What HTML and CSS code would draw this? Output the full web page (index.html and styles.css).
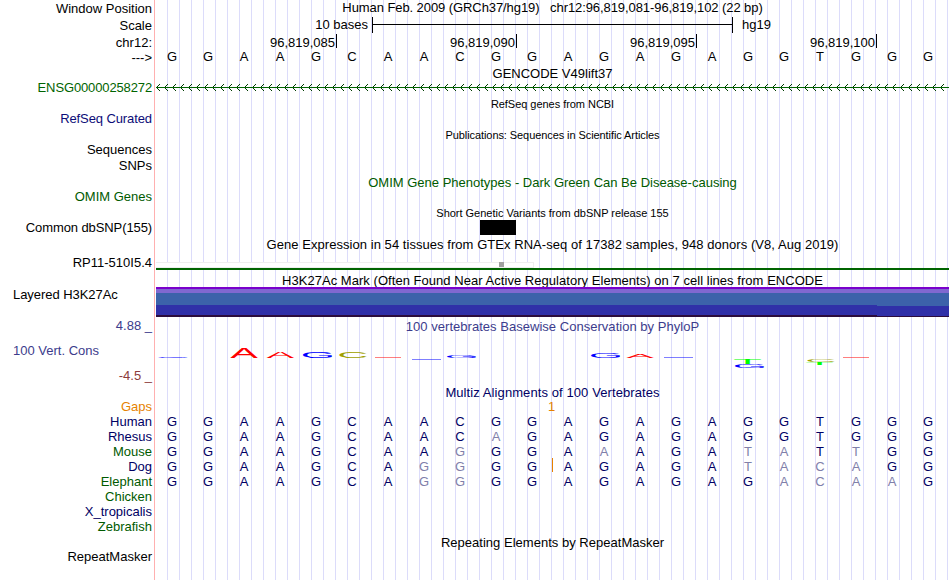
FILE: index.html
```html
<!doctype html>
<html lang="en">
    <head>
        <meta charset="UTF-8" />
        <meta name="viewport" content="width=device-width, initial-scale=1.0" />
        <title>Human chr12:96,819,081-96,819,102</title>
        <link rel="stylesheet" href="styles.css">
    </head>
    <body>
        <div class="browser">
            <div class="labels">
                <div class="group ruler-labels">
                    <div>Window Position</div>
                    <div>Scale</div>
                    <div>chr12:</div>
                </div>
                <div class="group">---&gt;</div>
                <div class="group gencode-label green">ENSG00000258272</div>
                <div class="group track-label refseq-label navy">RefSeq Curated</div>
                <div class="group track-label">Sequences</div>
                <div class="group snps-label">SNPs</div>
                <div class="group track-label dark-green">OMIM Genes</div>
                <div class="group track-label dbsnp-label">Common dbSNP(155)</div>
                <div class="group gtex-label">RP11-510I5.4</div>
                <div class="group h3k-label">Layered H3K27Ac</div>
                <div class="group cons-labels">
                    <div>4.88 _</div>
                    <div class="cons-name">100 Vert. Cons</div>
                    <div class="cons-min">-4.5 _</div>
                </div>
                <div class="group species-labels">
                    <div class="orange">Gaps</div>
                    <div class="blue">Human</div>
                    <div class="blue">Rhesus</div>
                    <div class="dark-green">Mouse</div>
                    <div class="blue">Dog</div>
                    <div class="dark-green">Elephant</div>
                    <div class="dark-green">Chicken</div>
                    <div class="blue">X_tropicalis</div>
                    <div class="dark-green">Zebrafish</div>
                </div>
                <div class="group repeat-label">RepeatMasker</div>
            </div>

            <div class="tracks">
                <div class="title position">Human Feb. 2009 (GRCh37/hg19)   chr12:96,819,081-96,819,102 (22 bp)</div>
                <div class="scale">
                    <span class="scale-size">10 bases</span>
                    <span class="scale-bar"></span>
                    <span>hg19</span>
                </div>
                <div class="ticks">
                    <span>96,819,085</span>
                    <span>96,819,090</span>
                    <span>96,819,095</span>
                    <span>96,819,100</span>
                </div>
                <div class="bases" data-seq="GGAAGCAACGGAGAGAGGTGGG"></div>

                <div class="title gencode">GENCODE V49lift37</div>
                <svg class="intron" width="793" height="7" shape-rendering="crispEdges">
                    <defs>
                        <pattern id="arrows" width="8" height="7" patternUnits="userSpaceOnUse">
                            <path d="M1 2h1v1h-1zM2 1h1v1h-1zM3 0h1v1h-1zM1 4h1v1h-1zM2 5h1v1h-1zM3 6h1v1h-1z" />
                        </pattern>
                    </defs>
                    <rect class="intron-line" y="3" width="793" height="1" />
                    <rect width="793" height="7" fill="url(#arrows)" />
                </svg>

                <div class="title small refseq">RefSeq genes from NCBI</div>
                <div class="title small pubs">Publications: Sequences in Scientific Articles</div>
                <div class="title omim dark-green">OMIM Gene Phenotypes - Dark Green Can Be Disease-causing</div>

                <div class="title small dbsnp">Short Genetic Variants from dbSNP release 155</div>
                <div class="snp"></div>

                <div class="title gtex">Gene Expression in 54 tissues from GTEx RNA-seq of 17382 samples, 948 donors (V8, Aug 2019)</div>
                <div class="gtex-graph"><span></span></div>
                <div class="gtex-gene"></div>

                <div class="title h3k">H3K27Ac Mark (Often Found Near Active Regulatory Elements) on 7 cell lines from ENCODE</div>
                <svg class="h3k-graph" width="793" height="30" shape-rendering="crispEdges">
                    <rect width="793" height="30" fill="#7a00cc" />
                    <rect y="2" width="793" height="4" fill="#8068d0" />
                    <rect y="6" width="793" height="13" fill="#3c62aa" />
                    <rect y="18" width="721" height="12" fill="#3030a8" />
                    <rect x="721" y="19" width="72" height="11" fill="#3030a8" />
                    <rect y="28" width="721" height="2" fill="#2c0c3c" />
                    <rect x="721" y="29" width="72" height="1" fill="#2c0c3c" />
                </svg>

                <div class="title cons">100 vertebrates Basewise Conservation by PhyloP</div>
                <!-- logo letters are stretched to the score of each base -->
                <svg class="logo" width="793" height="51">
                    <g class="c-g">
                        <text transform="translate(0.2 24) scale(.44 .02)">G</text>
                        <text transform="translate(144.7 24) scale(.44 .082)">G</text>
                        <text transform="translate(288.8 24) scale(.44 .04)">G</text>
                        <text transform="translate(432.8 24) scale(.44 .07)">G</text>
                        <text transform="translate(576.8 34) scale(.44 .045)">G</text>
                    </g>
                    <g class="c-a">
                        <text transform="translate(74.3 24) scale(.415 .145)">A</text>
                        <text transform="translate(110.5 24) scale(.415 .085)">A</text>
                        <text transform="translate(470.3 24) scale(.415 .058)">A</text>
                    </g>
                    <g class="c-c">
                        <text transform="translate(181.3 24) scale(.43 .093)">C</text>
                        <text transform="translate(649.3 28) scale(.43 .036)">C</text>
                    </g>
                    <g class="c-t">
                        <text transform="translate(577.3 30) scale(.47 .073)">T</text>
                        <text transform="translate(649.3 31) scale(.47 .044)">T</text>
                    </g>
                    <g shape-rendering="crispEdges">
                        <rect class="c-a thin" x="219" y="23" width="26" height="1" />
                        <rect class="c-g thin" x="256" y="25" width="29" height="1" />
                        <rect class="c-g thin" x="508" y="23" width="29" height="1" />
                        <rect class="c-a thin" x="687" y="23" width="26" height="1" />
                    </g>
                </svg>

                <div class="title multiz blue">Multiz Alignments of 100 Vertebrates</div>
                <div class="gaps orange">1</div>
                <div class="bases align" data-seq="GGAAGCAACGGAGAGAGGTGGG"></div>
                <div class="bases align" data-seq="GGAAGCAACAGAGAGAGGTGGG"></div>
                <div class="bases align" data-seq="GGAAGCAAGGGAAAGATATTGG"></div>
                <div class="bases align" data-seq="GGAAGCAGGGGAGAGATACAGG" data-insert="11"></div>
                <div class="bases align" data-seq="GGAAGCAGGGGAGAGAGACAAG"></div>

                <div class="title repeats">Repeating Elements by RepeatMasker</div>
            </div>
        </div>
        <script src="bases.js"></script>
    </body>
</html>
```
FILE: styles.css
```css
body {
    margin: 0;
    background: #fff;
    color: #000;
    font: 13px/15px "Liberation Sans", Arial, sans-serif;
}

.browser {
    display: flex;
    width: 949px;
    height: 580px;
    overflow: hidden;
}

/* left column */

.labels {
    box-sizing: border-box;
    width: 155px;
    flex: none;
    padding: 1px 2px 0 0;
    border-right: 1px solid #ffb0b0;
    text-align: right;
    white-space: nowrap;
}

.ruler-labels {
    display: flex;
    flex-direction: column;
    gap: 2px;
}

.gencode-label {
    margin-top: 15px;
    letter-spacing: -0.13px;
}

.track-label {
    margin-top: 16px;
}

.refseq-label,
.dbsnp-label {
    letter-spacing: -0.1px;
}

.snps-label {
    margin-top: 1px;
}

.gtex-label {
    margin-top: 20px;
}

.h3k-label {
    margin-top: 17px;
    padding-left: 13px;
    letter-spacing: -0.05px;
    text-align: left;
}

.cons-labels {
    margin-top: 16px;
    color: #3c3c8c;
}

.cons-name {
    margin-top: 10px;
    padding-left: 13px;
    text-align: left;
}

.cons-min {
    margin-top: 10px;
    color: #8c3c3c;
}

.species-labels {
    margin-top: 16px;
}

.repeat-label {
    margin-top: 15px;
}

.green {
    color: #006400;
}

.dark-green {
    color: #005a00;
}

.navy {
    color: #0c0c78;
}

.blue {
    color: #000064;
}

.orange {
    color: #e68200;
}

/* right column, guide lines every 12px */

.tracks {
    width: 793px;
    padding-left: 1px;
    background: repeating-linear-gradient(to right, #dcdcfa 0 1px, transparent 1px 12px) 12px 0 no-repeat;
}

.tracks svg {
    display: block;
}

.title {
    text-align: center;
    white-space: pre;
}

.small {
    font-size: 11px;
    line-height: 13px;
}

.position {
    letter-spacing: -0.08px;
}

.scale {
    display: flex;
    height: 16px;
    margin-top: 2px;
}

.scale-size {
    width: 212px;
    margin-right: 4px;
    text-align: right;
}

.scale-bar {
    box-sizing: border-box;
    width: 361px;
    margin-right: 9px;
    border: solid #000;
    border-width: 0 1px;
    background: linear-gradient(#000, #000) 0 7px / 100% 1px no-repeat;
}

.ticks {
    display: flex;
    margin-top: 1px;
}

.ticks span {
    box-sizing: border-box;
    width: 180px;
    height: 14px;
    padding: 1px 1px 0 0;
    border-right: 1px solid #000;
    text-align: right;
}

.ticks span:first-child {
    width: 181px;
}

.bases {
    display: grid;
    grid-template-columns: repeat(22, 36px);
    height: 15px;
    margin-left: -2px;
    text-align: center;
}

.ticks + .bases {
    margin-top: 1px;
}

.align {
    color: #000064;
}

.mismatch {
    color: #8080aa;
}

.insert {
    position: relative;
}

.insert::before {
    content: "";
    position: absolute;
    top: -1px;
    left: 2px;
    width: 1px;
    height: 14px;
    background: #e68200;
}

.gencode {
    margin-top: 2px;
}

.intron {
    margin-top: 3px;
    fill: #003c00;
}

.intron-line {
    fill: #006400;
}

.refseq {
    margin-top: 7px;
    letter-spacing: -0.04px;
}

.pubs {
    margin-top: 18px;
    letter-spacing: -0.08px;
}

.omim {
    margin-top: 33px;
}

.dbsnp {
    margin-top: 17px;
    letter-spacing: -0.02px;
}

.snp {
    width: 36px;
    height: 15px;
    margin-left: 324px;
    background: #000;
}

.gtex {
    margin-top: 2px;
    letter-spacing: 0.05px;
}

.gtex-graph {
    box-sizing: border-box;
    width: 378px;
    height: 6px;
    margin-top: 10px;
    padding-left: 343px;
    border: 1px solid #eee;
    border-left: 0;
    background: #fff;
}

.gtex-graph span {
    display: block;
    width: 5px;
    height: 5px;
    margin-top: -1px;
    background: #a0a0a0;
}

.gtex-gene {
    height: 2px;
    background: #006400;
}

.h3k {
    height: 14px;
    margin-top: 3px;
    letter-spacing: 0.04px;
}

.cons {
    margin-top: 2px;
    color: #3c3c8c;
    letter-spacing: 0.03px;
}

.logo text {
    font-size: 100px;
}

.c-a {
    fill: #f00;
}

.c-c {
    fill: #a0a000;
}

.c-g {
    fill: #00f;
}

.c-t {
    fill: #0f0;
}

.thin {
    opacity: 0.5;
}

.multiz {
    height: 14px;
    letter-spacing: 0.09px;
}

.gaps {
    height: 15px;
    padding-left: 392px;
}

.repeats {
    margin-top: 46px;
    letter-spacing: 0.02px;
}
```
FILE: bases.js
```js
const human = document.querySelector('.bases').dataset.seq

document.querySelectorAll('.bases').forEach((row) => {
    const insert = Number(row.dataset.insert)

    row.dataset.seq.split('').forEach((base, i) => {
        const cell = document.createElement('span')
        cell.textContent = base
        if (base !== human[i]) cell.classList.add('mismatch')
        if (insert && i === insert) cell.classList.add('insert')
        row.append(cell)
    })
})
```
